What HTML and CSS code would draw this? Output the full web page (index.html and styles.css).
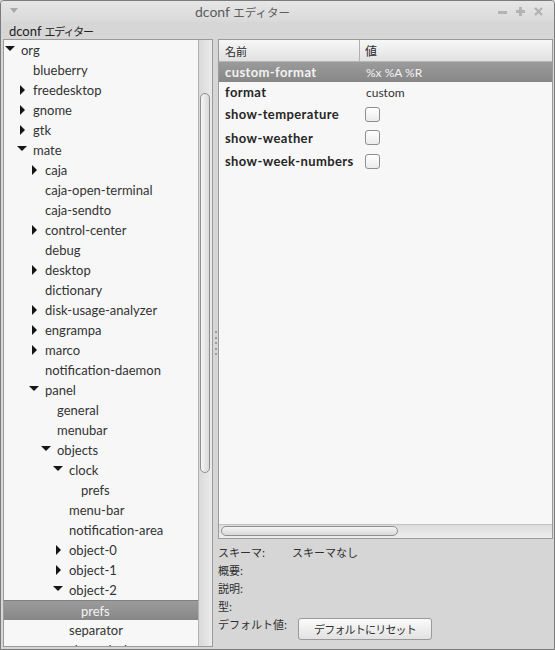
FILE: index.html
```html
<!DOCTYPE html>
<html lang="ja">
<head>
<meta charset="utf-8">
<title>dconf エディター</title>
<link rel="stylesheet" href="styles.css">
</head>
<body>
<div class="window">
  <div class="titlebar">
    <div class="tb-left">
      <svg width="8" height="5" viewBox="0 0 8 5"><path d="M0 0H8L4 5Z" fill="#a8a8a8"/></svg>
    </div>
    <div class="title">dconf <span class="ja">エディター</span></div>
    <div class="tb-right">
      <svg width="9" height="9" viewBox="0 0 9 9"><rect x="0" y="4" width="9" height="3" fill="#b3b3b3"/></svg>
      <svg width="9" height="9" viewBox="0 0 9 9"><rect x="0" y="3" width="9" height="3" fill="#b3b3b3"/><rect x="3" y="0" width="3" height="9" fill="#b3b3b3"/></svg>
      <svg width="9" height="9" viewBox="0 0 9 9"><path d="M1 1L8 8M8 1L1 8" stroke="#b3b3b3" stroke-width="2.4"/></svg>
    </div>
  </div>
  <div class="menubar">dconf <span class="ja">エディター</span></div>
  <div class="content">
    <div class="tree-frame">
      <div class="tree">
        <div class="node l0"><i class="exp d"></i>org</div>
        <div class="node l1"><i class="exp"></i>blueberry</div>
        <div class="node l1"><i class="exp r"></i>freedesktop</div>
        <div class="node l1"><i class="exp r"></i>gnome</div>
        <div class="node l1"><i class="exp r"></i>gtk</div>
        <div class="node l1"><i class="exp d"></i>mate</div>
        <div class="node l2"><i class="exp r"></i>caja</div>
        <div class="node l2"><i class="exp"></i>caja-open-terminal</div>
        <div class="node l2"><i class="exp"></i>caja-sendto</div>
        <div class="node l2"><i class="exp r"></i>control-center</div>
        <div class="node l2"><i class="exp"></i>debug</div>
        <div class="node l2"><i class="exp r"></i>desktop</div>
        <div class="node l2"><i class="exp"></i>dictionary</div>
        <div class="node l2"><i class="exp r"></i>disk-usage-analyzer</div>
        <div class="node l2"><i class="exp r"></i>engrampa</div>
        <div class="node l2"><i class="exp r"></i>marco</div>
        <div class="node l2"><i class="exp"></i>notification-daemon</div>
        <div class="node l2"><i class="exp d"></i>panel</div>
        <div class="node l3"><i class="exp"></i>general</div>
        <div class="node l3"><i class="exp"></i>menubar</div>
        <div class="node l3"><i class="exp d"></i>objects</div>
        <div class="node l4"><i class="exp d"></i>clock</div>
        <div class="node l5"><i class="exp"></i>prefs</div>
        <div class="node l4"><i class="exp"></i>menu-bar</div>
        <div class="node l4"><i class="exp"></i>notification-area</div>
        <div class="node l4"><i class="exp r"></i>object-0</div>
        <div class="node l4"><i class="exp r"></i>object-1</div>
        <div class="node l4"><i class="exp d"></i>object-2</div>
        <div class="node l5 selected"><i class="exp"></i>prefs</div>
        <div class="node l4"><i class="exp"></i>separator</div>
        <div class="node l4"><i class="exp"></i>show-desktop</div>
      </div>
      <div class="vscroll"><div class="vthumb"></div></div>
    </div>
    <div class="handle">
      <span class="dot"></span><span class="dot"></span><span class="dot"></span><span class="dot"></span><span class="dot"></span>
    </div>
    <div class="right">
      <div class="table-frame">
        <div class="thead">
          <div class="th name">名前</div>
          <div class="th val">値</div>
        </div>
        <div class="tbody">
          <div class="row selected h20"><div class="key">custom-format</div><div class="val">%x %A %R</div></div>
          <div class="row h20"><div class="key">format</div><div class="val">custom</div></div>
          <div class="row h24"><div class="key">show-temperature</div><div class="val"><span class="check"></span></div></div>
          <div class="row h23"><div class="key">show-weather</div><div class="val"><span class="check"></span></div></div>
          <div class="row h24"><div class="key">show-week-numbers</div><div class="val"><span class="check"></span></div></div>
        </div>
        <div class="hscroll"><div class="hthumb"></div></div>
      </div>
      <div class="info">
        <div class="info-row"><span class="lbl">スキーマ:</span><span>スキーマなし</span></div>
        <div class="info-row"><span class="lbl">概要:</span></div>
        <div class="info-row"><span class="lbl">説明:</span></div>
        <div class="info-row"><span class="lbl">型:</span></div>
        <div class="info-row default"><span class="lbl wide">デフォルト値:</span><button class="btn" type="button">デフォルトにリセット</button></div>
      </div>
    </div>
  </div>
</div>
</body>
</html>
```

FILE: styles.css
```css
* { box-sizing: border-box; }

body {
  margin: 0;
  font-family: Lato, "Noto Sans CJK JP", sans-serif;
  font-size: 13px;
  color: #333;
  background: #d6d6d6;
}

.ja {
  font-family: "Noto Sans CJK JP", sans-serif;
}

.window {
  width: 555px;
  height: 650px;
  border: 1px solid #7b7b7b;
  border-radius: 4px 4px 0 0;
  background: #d6d6d6;
  display: flex;
  flex-direction: column;
  overflow: hidden;
}

.titlebar {
  height: 21px;
  flex: none;
  display: flex;
  align-items: center;
  background: linear-gradient(#e6e6e6, #d9d9d9);
  padding: 0 11px 0 9px;
}

.tb-left { display: flex; align-items: center; width: 8px; }
.tb-left svg { margin-top: -2px; }

.title {
  margin-left: 177px;
  color: #5c5c5c;
  font-size: 14px;
  white-space: pre;
}
.title .ja { font-size: 11.5px; }

.tb-right {
  margin-left: auto;
  display: flex;
  align-items: center;
  gap: 9px;
}

.menubar {
  height: 17px;
  flex: none;
  padding-left: 8px;
  display: flex;
  align-items: center;
  color: #222;
  font-size: 13px;
  white-space: pre;
}
.menubar .ja { font-size: 11px; letter-spacing: -1.2px; }

.content {
  flex: 1;
  min-height: 0;
  display: flex;
  padding: 0 1px 2px 2px;
}

.tree-frame {
  width: 210px;
  flex: none;
  border: 1px solid #9b9b9b;
  background: #f7f7f7;
  display: flex;
}

.tree {
  flex: 1;
  overflow: hidden;
}

.node {
  height: 20px;
  display: flex;
  align-items: center;
  white-space: nowrap;
  color: #333;
}

.node.selected {
  background: linear-gradient(#9b9b9b, #878787);
  border-top: 1px solid #808080;
  color: #f4f4f4;
}

.l0 { padding-left: 0px; }
.l1 { padding-left: 12px; }
.l2 { padding-left: 24px; }
.l3 { padding-left: 36px; }
.l4 { padding-left: 48px; }
.l5 { padding-left: 60px; }

.exp {
  width: 17px;
  height: 20px;
  flex: none;
  display: flex;
  align-items: center;
}

.exp.d::before {
  content: "";
  margin-left: 1px;
  margin-top: -3px;
  border-left: 5px solid transparent;
  border-right: 5px solid transparent;
  border-top: 5px solid #151515;
}

.exp.r::before {
  content: "";
  margin-left: 4px;
  margin-top: -1px;
  border-top: 5px solid transparent;
  border-bottom: 5px solid transparent;
  border-left: 5px solid #151515;
}

.vscroll {
  width: 14px;
  flex: none;
  border-left: 1px solid #b2b2b2;
  background: linear-gradient(90deg, #d9d9d9, #ebebeb);
  padding: 53px 2px 0 1px;
}

.vthumb {
  height: 380px;
  border: 1px solid #8f8f8f;
  border-radius: 6px;
  background: linear-gradient(90deg, #f5f5f5, #d9d9d9);
}

.handle {
  width: 5px;
  flex: none;
  display: flex;
  flex-direction: column;
  align-items: center;
  justify-content: center;
  gap: 3.5px;
}

.dot {
  width: 2px;
  height: 2px;
  background: #9c9c9c;
}

.right {
  flex: 1;
  display: flex;
  flex-direction: column;
}

.table-frame {
  height: 500px;
  flex: none;
  border: 1px solid #9b9b9b;
  background: #f7f7f7;
  display: flex;
  flex-direction: column;
}

.thead {
  height: 22px;
  flex: none;
  display: flex;
  border-bottom: 1px solid #b6b6b6;
}

.th {
  background: linear-gradient(#f7f7f7, #e1e1e1);
  display: flex;
  align-items: center;
  font-family: "Noto Sans CJK JP", sans-serif;
  font-size: 11px;
  color: #2a2a2a;
}

.th.name {
  width: 141px;
  padding-left: 6px;
  border-right: 1px solid #b0b0b0;
}

.th.val {
  flex: 1;
  padding-left: 5px;
}

.tbody { flex: 1; }

.row {
  display: flex;
  align-items: center;
}

.h20 { height: 20px; }
.h23 { height: 23px; }
.h24 { height: 24px; }

.row.selected {
  background: linear-gradient(#9b9b9b, #878787);
  color: #f2f2f2;
}

.key {
  width: 141px;
  padding-left: 6px;
  font-weight: 700;
  letter-spacing: 0.4px;
  color: #262626;
  white-space: nowrap;
}

.row.selected .key { color: #f2f2f2; }

.val {
  padding-left: 6px;
  font-size: 12px;
  display: flex;
  align-items: center;
}

.check {
  width: 15px;
  height: 15px;
  margin-left: -1px;
  border: 1px solid #8e8e8e;
  border-radius: 3px;
  background: linear-gradient(#ffffff, #ebebeb);
}

.hscroll {
  height: 14px;
  flex: none;
  border-top: 1px solid #c2c2c2;
  background: linear-gradient(#dcdcdc, #eeeeee);
  padding: 1px 0 0 2px;
}

.hthumb {
  width: 177px;
  height: 10px;
  border: 1px solid #8f8f8f;
  border-radius: 5px;
  background: linear-gradient(#f5f5f5, #d9d9d9);
}

.info {
  padding-top: 4px;
  font-family: "Noto Sans CJK JP", sans-serif;
  font-size: 11px;
  color: #2e2e2e;
}

.info-row {
  height: 18px;
  display: flex;
  align-items: center;
}

.lbl { width: 74px; flex: none; }
.lbl.wide { width: 80px; }

.info-row.default {
  height: auto;
  align-items: flex-start;
  line-height: 18px;
}

.btn {
  margin-top: 3px;
  width: 134px;
  height: 22px;
  border: 1px solid #9a9a9a;
  border-radius: 3px;
  background: linear-gradient(#fbfbfb, #e2e2e2);
  font-family: "Noto Sans CJK JP", sans-serif;
  font-size: 11px;
  letter-spacing: -0.8px;
  color: #2e2e2e;
  padding: 0;
}
```
